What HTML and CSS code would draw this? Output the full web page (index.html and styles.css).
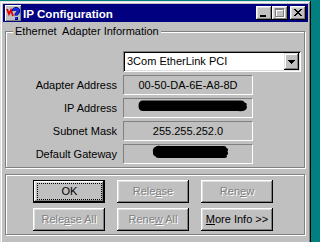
FILE: index.html
```html
<!DOCTYPE html>
<html>
<head>
<meta charset="utf-8">
<title>IP Configuration</title>
<link rel="stylesheet" href="styles.css">
</head>
<body>
<div class="window">
  <div class="titlebar">
    <svg class="app-icon" width="16" height="16" viewBox="0 0 16 16" shape-rendering="crispEdges">
      <rect x="0" y="0" width="16" height="16" fill="#c0c0c0"/>
      <path d="M0 0h16v1H1v15H0z" fill="#fff"/>
      <path d="M15 1h1v15H1v-1h14z" fill="#808080"/>
      <polyline points="2,4 4,9 6,5 8,11" fill="none" stroke="#e00000" stroke-width="1.8" shape-rendering="auto"/>
      <path d="M8.5 6 C8.5 3 13.5 3 13.5 6 C13.5 8 11 8 11 10.5" fill="none" stroke="#000060" stroke-width="3.4" shape-rendering="auto"/>
      <path d="M8.5 6 C8.5 3 13.5 3 13.5 6 C13.5 8 11 8 11 10.5" fill="none" stroke="#1030ff" stroke-width="1.8" shape-rendering="auto"/>
      <rect x="9.5" y="11.5" width="3" height="3" fill="#000060"/>
      <rect x="10" y="12" width="2" height="2" fill="#1030ff"/>
    </svg>
    <span class="title">IP Configuration</span>
    <div class="caption-buttons">
      <button class="cap-btn" aria-label="Minimize">
        <svg width="16" height="14" viewBox="0 0 16 14" shape-rendering="crispEdges"><rect x="4" y="9" width="6" height="2" fill="#000"/></svg>
      </button>
      <button class="cap-btn" aria-label="Maximize" disabled>
        <svg width="16" height="14" viewBox="0 0 16 14" shape-rendering="crispEdges">
          <path d="M4 3h9v9h-9z M5 5h7v6h-7z" fill="#fff" fill-rule="evenodd"/>
          <path d="M3 2h9v9h-9z M4 4h7v6h-7z" fill="#808080" fill-rule="evenodd"/>
        </svg>
      </button>
      <button class="cap-btn close" aria-label="Close">
        <svg width="16" height="14" viewBox="0 0 16 14" shape-rendering="crispEdges">
          <path d="M4 3h2v1h-2z M10 3h2v1h-2z M5 4h2v1h-2z M9 4h2v1h-2z M6 5h4v1h-4z M7 6h2v1h-2z M6 7h4v1h-4z M5 8h2v1h-2z M9 8h2v1h-2z M4 9h2v1h-2z M10 9h2v1h-2z" fill="#000"/>
        </svg>
      </button>
    </div>
  </div>

  <div class="client">
    <fieldset class="group info">
      <legend>Ethernet&nbsp; Adapter Information</legend>
      <div class="info-grid">
        <div class="combo">
          <span class="combo-text">3Com EtherLink PCI</span>
          <span class="combo-btn">
            <svg width="7" height="4" viewBox="0 0 7 4" shape-rendering="crispEdges"><path d="M0 0h7v1h-1v1h-1v1h-1v1h-1v-1h-1v-1h-1v-1h-1z" fill="#000"/></svg>
          </span>
        </div>

        <span class="label">Adapter Address</span>
        <div class="field">00-50-DA-6E-A8-8D</div>

        <span class="label">IP Address</span>
        <div class="field redacted ip">
          <svg width="110" height="12" viewBox="0 0 110 12"><path d="M5 0.5 H103 Q106 0.5 106.5 2.5 Q109.5 3 108.5 5.5 Q110 8.5 106.5 10.5 Q104 11.5 100 11 H6 Q0.5 11.5 0.5 6 Q0.5 0.5 5 0.5 Z" fill="#000"/></svg>
        </div>

        <span class="label">Subnet Mask</span>
        <div class="field">255.255.252.0</div>

        <span class="label">Default Gateway</span>
        <div class="field redacted gw">
          <svg width="77" height="14" viewBox="0 0 77 14"><path d="M4 1.5 Q5 0.5 9 1 H71 Q74 0.5 74.5 3 Q77 4 75.5 6.5 Q77 9 74.5 10.5 Q76 13 72 13 H8 Q4 13.5 3 11 Q0.5 10 1 7 Q0 3 4 1.5 Z" fill="#000"/></svg>
        </div>
      </div>
    </fieldset>

    <fieldset class="group actions">
      <div class="btn-grid">
        <button class="btn default"><span class="focus">OK</span></button>
        <button class="btn" disabled><span>Rele<u>a</u>se</span></button>
        <button class="btn" disabled><span>Ren<u>e</u>w</span></button>
        <button class="btn" disabled><span>Rele<u>a</u>se All</span></button>
        <button class="btn" disabled><span>Rene<u>w</u> All</span></button>
        <button class="btn"><span><u>M</u>ore Info &gt;&gt;</span></button>
      </div>
    </fieldset>
  </div>
</div>
</body>
</html>
```

FILE: styles.css
```css
html, body {
  margin: 0;
  padding: 0;
}

body {
  background: #008080;
  width: 313px;
  height: 242px;
  overflow: hidden;
  font-family: "Liberation Sans", Arial, sans-serif;
  font-size: 11px;
  line-height: 13px;
  color: #000;
}

.window {
  margin-top: 1px;
  width: 311px;
  height: 245px;
  box-sizing: border-box;
  padding: 3px;
  background: #c0c0c0;
  box-shadow:
    inset -1px -1px #000,
    inset 1px 1px #dfdfdf,
    inset -2px -2px #808080,
    inset 2px 2px #fff;
}

/* ---------- title bar ---------- */
.titlebar {
  height: 18px;
  background: #000080;
  display: flex;
  align-items: center;
  padding: 0 2px;
  color: #fff;
}

.app-icon {
  display: block;
  flex: none;
}

.title {
  margin-left: 2px;
  font-weight: bold;
  font-size: 11.6px;
  white-space: nowrap;
}

.caption-buttons {
  margin-left: auto;
  display: flex;
}

.cap-btn {
  width: 16px;
  height: 14px;
  padding: 0;
  border: none;
  background: #c0c0c0;
  box-shadow:
    inset -1px -1px #000,
    inset 1px 1px #fff,
    inset -2px -2px #808080,
    inset 2px 2px #dfdfdf;
  display: block;
}

.cap-btn svg {
  display: block;
}

.cap-btn.close {
  margin-left: 2px;
}

/* ---------- groups ---------- */
.group {
  margin: 0 0 0 2px;
  width: 300px;
  box-sizing: border-box;
  min-inline-size: 0;
  border: 1px solid #808080;
  box-shadow: inset 1px 1px #fff, 1px 1px #fff;
}

.group legend {
  margin-left: 7px;
  padding: 0 2px;
  line-height: 13px;
  background: #c0c0c0;
  white-space: nowrap;
}

.info {
  margin-top: 3px;
  padding: 14px 0 3px 0;
}

.info-grid {
  display: grid;
  grid-template-columns: 111px 178px;
  column-gap: 6px;
  row-gap: 3px;
  grid-auto-rows: 20px;
  align-items: center;
}

.label {
  text-align: right;
  white-space: nowrap;
}

/* combo box */
.combo {
  grid-column: 2;
  height: 21px;
  margin-bottom: 1px;
  box-sizing: border-box;
  padding: 2px;
  background: #fff;
  display: flex;
  align-items: stretch;
  box-shadow:
    inset 1px 1px #808080,
    inset -1px -1px #fff,
    inset 2px 2px #000,
    inset -2px -2px #dfdfdf;
}

.combo-text {
  flex: 1;
  padding-left: 2px;
  display: flex;
  align-items: center;
}

.combo-btn {
  width: 15px;
  background: #c0c0c0;
  display: flex;
  align-items: center;
  justify-content: center;
  box-shadow:
    inset -1px -1px #000,
    inset 1px 1px #dfdfdf,
    inset -2px -2px #808080,
    inset 2px 2px #fff;
}

.combo-btn svg {
  display: block;
}

/* read-only fields */
.field {
  width: 130px;
  height: 20px;
  box-sizing: border-box;
  border-top: 1px solid #808080;
  border-left: 1px solid #808080;
  border-bottom: 1px solid #fff;
  border-right: 1px solid #fff;
  display: flex;
  align-items: center;
  justify-content: center;
  white-space: nowrap;
}

.field.redacted {
  justify-content: flex-start;
}

.field.redacted svg {
  display: block;
}

.field.ip svg {
  margin: -4px 0 0 14px;
}

.field.gw svg {
  margin: -5px 0 0 28px;
}

/* ---------- buttons ---------- */
.actions {
  margin-top: 6px;
  padding: 5px 0 3px 27px;
}

.btn-grid {
  display: grid;
  grid-template-columns: repeat(3, 72px);
  grid-auto-rows: 23px;
  column-gap: 12px;
  row-gap: 5px;
}

.btn {
  font: inherit;
  color: #000;
  margin: 0;
  padding: 0;
  border: none;
  background: #c0c0c0;
  box-sizing: border-box;
  display: flex;
  align-items: center;
  justify-content: center;
  white-space: nowrap;
  box-shadow:
    inset -1px -1px #000,
    inset 1px 1px #fff,
    inset -2px -2px #808080,
    inset 2px 2px #dfdfdf;
}

.btn:disabled {
  color: #808080;
  text-shadow: 1px 1px 0 #fff;
}

.btn.default {
  border: 1px solid #000;
  padding: 2px 2px 2px 3px;
  align-items: stretch;
}

.btn .focus {
  flex: 1;
  display: flex;
  align-items: center;
  justify-content: center;
  border: 1px dotted #000;
}
```
